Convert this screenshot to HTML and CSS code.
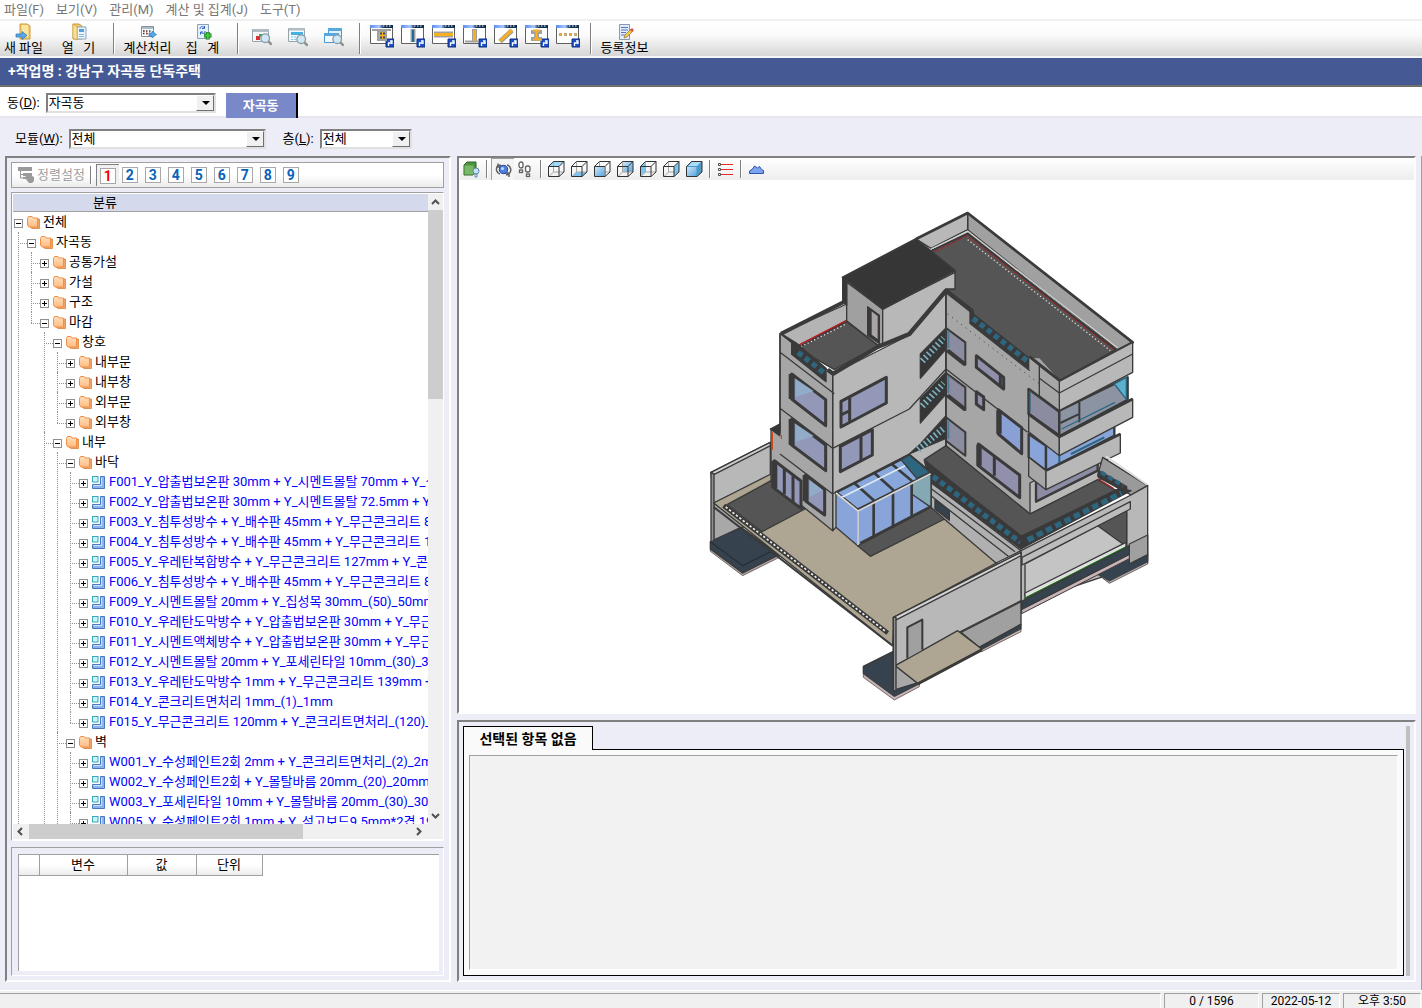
FILE: index.html
```html
<!DOCTYPE html>
<html lang="ko">
<head>
    <meta charset="UTF-8">
    <meta name="viewport" content="width=device-width, initial-scale=1.0">
    <title>강남구 자곡동 단독주택</title>
    <link rel="stylesheet" href="styles.css">
</head>
<body>
    <!-- shared icons -->
    <svg class="defs" width="0" height="0" aria-hidden="true">
        <defs>
            <linearGradient id="g-folder" x1="0" y1="0" x2="0" y2="1"><stop offset="0" stop-color="#ffe0c0"/><stop offset="1" stop-color="#ffbc80"/></linearGradient>
            <linearGradient id="g-blue" x1="0" y1="0" x2="1" y2="1"><stop offset="0" stop-color="#cfe6fa"/><stop offset="1" stop-color="#5aa6dc"/></linearGradient>
            <linearGradient id="g-bar" x1="0" y1="0" x2="1" y2="0"><stop offset="0" stop-color="#5a8cf0"/><stop offset=".4" stop-color="#a8c8ff"/><stop offset=".6" stop-color="#103050"/><stop offset="1" stop-color="#103050"/></linearGradient>
            <symbol id="i-folder" viewBox="0 0 13 13">
                <path d="M4 3h8.500v9.500H5L3 11z" fill="#f0a468" stroke="#d87a30" stroke-width=".7"/>
                <path d="M.5 2.500l1-2h3.500l1 1.500h4.500v9H2L.5 9z" fill="url(#g-folder)" stroke="#f09048"/>
            </symbol>
            <symbol id="i-part" viewBox="0 0 13 13">
                <path d="M8.500.5H12.500V12.500H.5V8.500H8.500z" fill="#8ab4ec" stroke="#4a78c0"/>
                <path d="M9.500 1.500V9.500H1.500" fill="none" stroke="#cfe2fa"/>
                <rect x=".5" y=".5" width="5.500" height="5.500" fill="#c8f4f8" stroke="#38a8b8"/>
            </symbol>
            <symbol id="i-lens" viewBox="0 0 10 10">
                <path d="M6 6l3 3" stroke="#909090" stroke-width="2"/>
                <circle cx="4" cy="4" r="3.300" fill="#d0e8f6" stroke="#8c9aa4"/>
            </symbol>
            <symbol id="i-win" viewBox="0 0 24 24">
                <path d="M.5 2.500h22v17H.5z" fill="#fff" stroke="#606060"/>
                <path d="M0 1h23v3H0z" fill="url(#g-bar)"/>
                <path d="M13 2h1.500M16 2h1.500M19 2h1.500" stroke="#fff"/>
                <path d="M16 15h8v8h-8z" fill="#1c50c8" stroke="#0c2c80"/>
                <path d="M18.500 22v-3h3M20 17h2v3" fill="none" stroke="#fff" stroke-width="1.300"/>
            </symbol>
            <symbol id="i-cube" viewBox="0 0 17 17">
                <path d="M5.500 1v10h10M5.500 11l-4 4" fill="none" stroke="#a8a8a8"/>
                <path d="M.5 5.500h10.500v10H.5zM.5 5.500l5-5H16l-5 5M16 .5V11l-5 4.500" fill="none" stroke="#333"/>
            </symbol>
        </defs>
    </svg>

    <nav class="menubar">
        <a href="#">파일(F)</a>
        <a href="#">보기(V)</a>
        <a href="#">관리(M)</a>
        <a href="#">계산 및 집계(J)</a>
        <a href="#">도구(T)</a>
    </nav>

    <div class="toolbar">
        <button type="button" class="tool">
            <svg width="18" height="18" viewBox="0 0 18 18"><path d="M5 1h7l3 2v13H5z" fill="#f4d078" stroke="#c89838"/><path d="M7 2h6v12H7z" fill="#fbe4a0"/><path d="M1 11h6V8.500l5 4-5 4V14H1z" fill="#58a8e8" stroke="#2870b8" stroke-width=".7"/></svg>
            <span>새 파일</span>
        </button>
        <button type="button" class="tool">
            <svg width="18" height="18" viewBox="0 0 18 18"><path d="M3 1h6l3 2v13H3z" fill="#f0c868" stroke="#c89838"/><path d="M7 4h9v12H7z" fill="#e8f4fc" stroke="#88a8c0"/><path d="M9 6h5v3H9z" fill="#58a0d8"/><path d="M9 11.500h5M9 13.500h5" stroke="#90b8d8"/><path d="M3 1l4 3v13l-4-2z" fill="#fbe09a" stroke="#c89838" stroke-width=".6"/></svg>
            <span>열   기</span>
        </button>
        <i class="sep"></i>
        <button type="button" class="tool">
            <svg width="18" height="18" viewBox="0 0 18 18"><path d="M2.500 3.500h12v10h-12z" fill="#fff" stroke="#889098"/><path d="M3 4h11v2H3z" fill="#a8bccc"/><path d="M4 8h9M4 10.500h9" stroke="#303030" stroke-width="1.500" stroke-dasharray="1.500 1.500"/><path d="M4 8h1.500M7 10.500h1.500" stroke="#c03030" stroke-width="1.500"/><path d="M10 10h3V8l4.500 3.500L13 15v-2h-3z" fill="#58a8e8" stroke="#2870b8" stroke-width=".6"/></svg>
            <span>계산처리</span>
        </button>
        <button type="button" class="tool">
            <svg width="18" height="18" viewBox="0 0 18 18"><path d="M3.500 1.500h11v14h-11z" fill="#e4f0fa" stroke="#88a0b8"/><path d="M6 6c0-2.500 2.500-3 4-1.500M10.500 3v2.500H8M11 8c0 2.500-2.500 3-4 1.500M6.500 11.500V9H9" fill="none" stroke="#2860c8"/><path d="M10 12.500h7.500M13.750 9v7.500" stroke="#18781c" stroke-width="4"/><path d="M10.500 12.500h6.500M13.750 9.500v6.500" stroke="#48c848" stroke-width="2"/></svg>
            <span>집   계</span>
        </button>
        <i class="sep"></i>
        <button type="button" class="tool tool-md" title="모델 검색">
            <svg width="20" height="20" viewBox="0 0 20 20"><path d="M.5 2.500h16v12H.5z" fill="#f4f6f8" stroke="#98a4ac"/><path d="M1 2h16v3H1z" fill="#b0bcc4"/><path d="M4 9h4v4H4z" fill="#d83030"/><path d="M7 7h4v3H7z" fill="#48a048"/><use href="#i-lens" x="8" y="6" width="13" height="13"/></svg>
        </button>
        <button type="button" class="tool tool-md" title="표 검색">
            <svg width="20" height="20" viewBox="0 0 20 20"><path d="M.5 1.500h16v13H.5z" fill="#f0f8fc" stroke="#98a4ac"/><path d="M1 1h16v2.500H1z" fill="#b0bcc4"/><path d="M3 5h12v3H3z" fill="#48b0e0"/><path d="M3 10h11M3 12.500h9" stroke="#80c4e8" stroke-dasharray="2 1"/><use href="#i-lens" x="8" y="7" width="13" height="13"/></svg>
        </button>
        <button type="button" class="tool tool-md" title="창 검색">
            <svg width="20" height="20" viewBox="0 0 20 20"><path d="M4.500 1.500h13v9h-13z" fill="#e4f2fc" stroke="#4898d8"/><path d="M4 1h14v3H4z" fill="#58a8e0"/><path d="M.5 6.500h14v9H.5z" fill="#f4fafe" stroke="#4898d8"/><path d="M0 6h15v3H0z" fill="#58a8e0"/><use href="#i-lens" x="8" y="7" width="13" height="13"/></svg>
        </button>
        <i class="sep"></i>
        <button type="button" class="tool tool-sm" title="기초"><svg width="24" height="24"><use href="#i-win"/><path d="M2 6h19" stroke="#a0a0a0" stroke-width="2"/><path d="M8 7h8v9H8z" fill="#f8b020" stroke="#a0a0a0" stroke-width="2"/><path d="M10 9.500h5M10 13.500h5" stroke="#205080" stroke-width="2" stroke-dasharray="2 1"/></svg></button>
        <button type="button" class="tool tool-sm" title="기둥"><svg width="24" height="24"><use href="#i-win"/><path d="M12 5v13" stroke="#a0a0a0" stroke-width="5"/><path d="M12 6v12" stroke="#187098" stroke-width="2"/></svg></button>
        <button type="button" class="tool tool-sm" title="보"><svg width="24" height="24"><use href="#i-win"/><path d="M2 10.500h19" stroke="#a0a0a0" stroke-width="6"/><path d="M2 10.500h19" stroke="#f8b020" stroke-width="3"/></svg></button>
        <button type="button" class="tool tool-sm" title="벽체"><svg width="24" height="24"><use href="#i-win"/><path d="M2 17.500h14M11.500 5v12" stroke="#a0a0a0" stroke-width="2"/><path d="M11.500 5v12" stroke="#a0a0a0" stroke-width="5"/><path d="M11.500 6v11" stroke="#f8b020" stroke-width="3"/></svg></button>
        <button type="button" class="tool tool-sm" title="계단"><svg width="24" height="24"><use href="#i-win"/><path d="M6 17.500L18 6.500" fill="none" stroke="#a0a0a0" stroke-width="5"/><path d="M6 17L18 6" stroke="#f8b020" stroke-width="3"/></svg></button>
        <button type="button" class="tool tool-sm" title="철골"><svg width="24" height="24"><use href="#i-win"/><path d="M6 6h11v4h-3v3h3v4H6v-4h3v-3H6z" fill="#a0a0a0"/><path d="M8 6.500h7M8 15.500h8M11.500 6v9" stroke="#f8b020" stroke-width="2"/></svg></button>
        <button type="button" class="tool tool-sm" title="기타"><svg width="24" height="24"><use href="#i-win"/><path d="M3 10.500h18" stroke="#a0a0a0" stroke-width="3" stroke-dasharray="3 2"/><path d="M3.500 10.500h18" stroke="#f8b020" stroke-width="2" stroke-dasharray="2 3"/></svg></button>
        <i class="sep"></i>
        <button type="button" class="tool">
            <svg width="18" height="18" viewBox="0 0 18 18"><path d="M3.500 1.500h10v15h-10z" fill="#e4ecf8" stroke="#8898b0"/><path d="M5 4.500h7M5 7h7M5 9.500h5M5 12h4" stroke="#5078c0"/><path d="M8 15l1-3 6-6 2 2-6 6z" fill="#f4c848" stroke="#906020" stroke-width=".6"/><path d="M14 7l2-2 2 2-2 2z" fill="#e05050"/></svg>
            <span>등록정보</span>
        </button>
    </div>

    <header class="title">+작업명 : 강남구 자곡동 단독주택</header>

    <div class="dong-row">
        <label for="dong">동(<u>D</u>):</label>
        <span class="combo combo-dong"><select id="dong"><option>자곡동</option></select></span>
        <button type="button" class="dong-tab">자곡동</button>
    </div>

    <div class="filter-row">
        <label for="module">모듈(<u>W</u>):</label>
        <span class="combo combo-module"><select id="module"><option>전체</option></select></span>
        <label for="floor">층(<u>L</u>):</label>
        <span class="combo combo-floor"><select id="floor"><option>전체</option></select></span>
    </div>

    <main class="work">
        <section class="side sunken">
            <div class="sortbar">
                <button type="button" class="sort" disabled>
                    <svg width="17" height="16" viewBox="0 0 17 16"><path d="M0 0h14v4H0zM5 6h9v3H5zM5 10h7v2H5z" fill="#9a9a9a"/><path d="M2.500 4v7H5M2.500 7.500H5" fill="none" stroke="#9a9a9a"/><path d="M8 8l2-1 6 3v4l-2 2h-3L7 11z" fill="#9a9a9a"/></svg>
                    정렬설정
                </button>
                <i class="sep"></i>
                <button type="button" class="num on"><b>1</b></button>
                <button type="button" class="num"><b>2</b></button>
                <button type="button" class="num"><b>3</b></button>
                <button type="button" class="num"><b>4</b></button>
                <button type="button" class="num"><b>5</b></button>
                <button type="button" class="num"><b>6</b></button>
                <button type="button" class="num"><b>7</b></button>
                <button type="button" class="num"><b>8</b></button>
                <button type="button" class="num"><b>9</b></button>
            </div>

            <div class="tree-box">
                <div class="tree-main">
                    <div class="tree-head"><span>분류</span></div>
                    <div class="tree">
                        <ul>
                            <li><div class="row"><i class="box open"></i><svg><use href="#i-folder"/></svg>전체</div>
                                <ul>
                                    <li><div class="row"><i class="box open"></i><svg><use href="#i-folder"/></svg>자곡동</div>
                                        <ul>
                                            <li><div class="row"><i class="box"></i><svg><use href="#i-folder"/></svg>공통가설</div></li>
                                            <li><div class="row"><i class="box"></i><svg><use href="#i-folder"/></svg>가설</div></li>
                                            <li><div class="row"><i class="box"></i><svg><use href="#i-folder"/></svg>구조</div></li>
                                            <li class="last"><div class="row"><i class="box open"></i><svg><use href="#i-folder"/></svg>마감</div>
                                                <ul>
                                                    <li><div class="row"><i class="box open"></i><svg><use href="#i-folder"/></svg>창호</div>
                                                        <ul>
                                                            <li><div class="row"><i class="box"></i><svg><use href="#i-folder"/></svg>내부문</div></li>
                                                            <li><div class="row"><i class="box"></i><svg><use href="#i-folder"/></svg>내부창</div></li>
                                                            <li><div class="row"><i class="box"></i><svg><use href="#i-folder"/></svg>외부문</div></li>
                                                            <li class="last"><div class="row"><i class="box"></i><svg><use href="#i-folder"/></svg>외부창</div></li>
                                                        </ul>
                                                    </li>
                                                    <li><div class="row"><i class="box open"></i><svg><use href="#i-folder"/></svg>내부</div>
                                                        <ul>
                                                            <li><div class="row"><i class="box open"></i><svg><use href="#i-folder"/></svg>바닥</div>
                                                                <ul class="parts">
                                                                    <li><div class="row"><i class="box"></i><svg><use href="#i-part"/></svg>F001_Y_압출법보온판 30mm + Y_시멘트몰탈 70mm + Y_셀</div></li>
                                                                    <li><div class="row"><i class="box"></i><svg><use href="#i-part"/></svg>F002_Y_압출법보온판 30mm + Y_시멘트몰탈 72.5mm + Y_</div></li>
                                                                    <li><div class="row"><i class="box"></i><svg><use href="#i-part"/></svg>F003_Y_침투성방수 + Y_배수판 45mm + Y_무근콘크리트 8</div></li>
                                                                    <li><div class="row"><i class="box"></i><svg><use href="#i-part"/></svg>F004_Y_침투성방수 + Y_배수판 45mm + Y_무근콘크리트 1</div></li>
                                                                    <li><div class="row"><i class="box"></i><svg><use href="#i-part"/></svg>F005_Y_우레탄복합방수 + Y_무근콘크리트 127mm + Y_콘크</div></li>
                                                                    <li><div class="row"><i class="box"></i><svg><use href="#i-part"/></svg>F006_Y_침투성방수 + Y_배수판 45mm + Y_무근콘크리트 8</div></li>
                                                                    <li><div class="row"><i class="box"></i><svg><use href="#i-part"/></svg>F009_Y_시멘트몰탈 20mm + Y_집성목 30mm_(50)_50mm</div></li>
                                                                    <li><div class="row"><i class="box"></i><svg><use href="#i-part"/></svg>F010_Y_우레탄도막방수 + Y_압출법보온판 30mm + Y_무근</div></li>
                                                                    <li><div class="row"><i class="box"></i><svg><use href="#i-part"/></svg>F011_Y_시멘트액체방수 + Y_압출법보온판 30mm + Y_무근</div></li>
                                                                    <li><div class="row"><i class="box"></i><svg><use href="#i-part"/></svg>F012_Y_시멘트몰탈 20mm + Y_포세린타일 10mm_(30)_30m</div></li>
                                                                    <li><div class="row"><i class="box"></i><svg><use href="#i-part"/></svg>F013_Y_우레탄도막방수 1mm + Y_무근콘크리트 139mm +</div></li>
                                                                    <li><div class="row"><i class="box"></i><svg><use href="#i-part"/></svg>F014_Y_콘크리트면처리 1mm_(1)_1mm</div></li>
                                                                    <li class="last"><div class="row"><i class="box"></i><svg><use href="#i-part"/></svg>F015_Y_무근콘크리트 120mm + Y_콘크리트면처리_(120)_1</div></li>
                                                                </ul>
                                                            </li>
                                                            <li><div class="row"><i class="box open"></i><svg><use href="#i-folder"/></svg>벽</div>
                                                                <ul class="parts">
                                                                    <li><div class="row"><i class="box"></i><svg><use href="#i-part"/></svg>W001_Y_수성페인트2회 2mm + Y_콘크리트면처리_(2)_2mm</div></li>
                                                                    <li><div class="row"><i class="box"></i><svg><use href="#i-part"/></svg>W002_Y_수성페인트2회 + Y_몰탈바름 20mm_(20)_20mm</div></li>
                                                                    <li><div class="row"><i class="box"></i><svg><use href="#i-part"/></svg>W003_Y_포세린타일 10mm + Y_몰탈바름 20mm_(30)_30m</div></li>
                                                                    <li><div class="row"><i class="box"></i><svg><use href="#i-part"/></svg>W005_Y_수성페인트2회 1mm + Y_석고보드9.5mm*2겹 19m</div></li>
                                                                </ul>
                                                            </li>
                                                        </ul>
                                                    </li>
                                                </ul>
                                            </li>
                                        </ul>
                                    </li>
                                </ul>
                            </li>
                        </ul>
                    </div>
                </div>
                <div class="vbar">
                    <svg width="15" height="16"><path d="M4 10l3.500-3.500L11 10" /></svg>
                    <i class="thumb"></i>
                    <svg class="end" width="15" height="16"><path d="M4 6l3.500 3.500L11 6" /></svg>
                </div>
                <div class="hbar">
                    <svg width="16" height="15"><path d="M9 4L5.500 7.500 9 11" /></svg>
                    <i class="thumb"></i>
                    <svg class="end" width="16" height="15"><path d="M5 4l3.500 3.500L5 11" /></svg>
                </div>
                <i class="corner"></i>
            </div>

            <div class="vars">
                <div class="vars-in">
                    <table>
                        <tr><th class="c0"></th><th class="c1">변수</th><th class="c2">값</th><th class="c3">단위</th></tr>
                    </table>
                </div>
            </div>
        </section>

        <div class="right">
            <section class="view sunken">
                <div class="viewbar">
                    <button type="button" title="모델"><svg width="17" height="17" viewBox="0 0 17 17"><path d="M1 4l3-3h9v9l-3 4H1z" fill="#4c9440" stroke="#2c6424"/><path d="M1.500 4.500h9v9h-9z" fill="#78b868"/><circle cx="13" cy="10" r="3" fill="#c8e4fa" stroke="#6088b0"/><path d="M12 13h2v3h-2z" fill="#fff" stroke="#6088b0"/></svg></button>
                    <i class="sep"></i>
                    <button type="button" class="on" title="회전"><svg width="17" height="17" viewBox="0 0 17 17"><path d="M5 13C1.500 12 .5 8 2.500 5L6 4M3 2.500v3.500h3.500M12 4c4 1 5 6 2 9l-3 1M14 16v-4h-4" fill="none" stroke="#606060" stroke-width="1.500"/><circle cx="8.500" cy="8.500" r="4.200" fill="#5080e0" stroke="#2040a0"/><circle cx="7.500" cy="7.500" r="1.600" fill="#c0d8ff"/></svg></button>
                    <button type="button" title="보행"><svg width="17" height="17" viewBox="0 0 17 17"><g fill="#fff" stroke="#606060" stroke-width="1.300"><rect x="2" y="1" width="4" height="6" rx="2"/><rect x="2.500" y="9" width="3" height="2.500"/><rect x="8.500" y="5" width="4.500" height="6" rx="2"/><rect x="9.500" y="13" width="3" height="2.500"/></g></svg></button>
                    <i class="sep"></i>
                    <button type="button" title="위"><svg width="17" height="17"><path d="M1 5l4.500-4.500H16l-5 5z" fill="#a0d8f8"/><use href="#i-cube"/></svg></button>
                    <button type="button" title="아래"><svg width="17" height="17"><path d="M1 15.500L5.500 11H16l-5 4.500z" fill="#7cc4f0"/><use href="#i-cube"/></svg></button>
                    <button type="button" title="앞"><svg width="17" height="17"><use href="#i-cube"/><path d="M1 6h9.500v9H1z" fill="url(#g-blue)"/></svg></button>
                    <button type="button" title="뒤"><svg width="17" height="17"><path d="M5.500 1H16v10H5.500z" fill="url(#g-blue)"/><use href="#i-cube"/></svg></button>
                    <button type="button" title="왼쪽"><svg width="17" height="17"><path d="M1 5.500L5.500 1v10L1 15z" fill="#7cc4f0"/><use href="#i-cube"/></svg></button>
                    <button type="button" title="오른쪽"><svg width="17" height="17"><path d="M11 5.500L16 1v10l-5 4.500z" fill="#7cc4f0"/><use href="#i-cube"/></svg></button>
                    <button type="button" title="전체"><svg width="17" height="17"><path d="M.5 5.500l5-5H16V11l-5 4.500H.5z" fill="#4c98c8" stroke="#333"/><path d="M1 6h9.500v9H1z" fill="url(#g-blue)"/><path d="M2 5l4-4h9l-4 4z" fill="#a8dcf8"/></svg></button>
                    <i class="sep"></i>
                    <button type="button" title="층 목록"><svg width="17" height="17"><path d="M4 3.500h12M4 8.500h12M4 13.500h12" stroke="#e82828"/><path d="M1.500 2.500h2v2h-2zM1.500 7.500h2v2h-2zM1.500 12.500h2v2h-2z" fill="#fff" stroke="#505050"/></svg></button>
                    <i class="sep"></i>
                    <button type="button" title="지형"><svg width="17" height="17"><path d="M1.500 12.500V10l3-2 2-3 3 2 2-1.500 2 3 2 1v3z" fill="#7ca4ec" stroke="#2c54b0"/></svg></button>
                </div>
                <div class="canvas">
                    <svg class="model" viewBox="0 0 1416 1530" role="img" aria-label="단독주택 3D 모델">
                        <g stroke="#3a3a3a" stroke-width="4" stroke-linejoin="round">
                            <!-- west retaining wall and footing -->
                            <path d="M30 820L208 730V830L38 912z" fill="#b8b8b8"/>
                            <path d="M30 820l178-90v10L40 826z" fill="#d0d0d0"/>
                            <path d="M38 912V1028l90-45 50 20z" fill="#a8a8a8"/>
                            <path d="M28 1050l97 72 110-56v9l-110 55-97-73z" fill="#b8a4a4" stroke-width="2"/>
                            <path d="M28 1028l92-43 115 82-110 55-97-72z" fill="#36424e"/>
                            <path d="M28 1028l97 72 110-55" fill="none" stroke="#26303a"/>
                            <path d="M30 820l9 5v200l-9 3z" fill="#909090"/>
                            <!-- front footing -->
                            <path d="M487 1402l90-45v108l70-25 8 15-75 38-93-70z" fill="#36424e"/>
                            <path d="M487 1425l93 68 75-38v8l-75 40-93-68z" fill="#c8b4b4" stroke-width="2"/>
                            <!-- yard -->
                            <path d="M38 912L210 825 400 980 730 960 890 1090 580 1255 575 1340z" fill="#aea692"/>
                            <path d="M38 924L575 1340" fill="none" stroke-width="6"/>
                            <path d="M78 917L210 845 312 930 183 998z" fill="#555"/>
                            <path d="M470 1040l38 32 235-118-53-30z" fill="#555"/>
                            <path d="M68 920L560 1302" fill="none" stroke-width="14"/>
                            <path d="M74 924L556 1299" fill="none" stroke="#eee" stroke-width="5" stroke-dasharray="7 6"/>

                            <!-- walls -->
                            <path d="M237 403L395 525V995L210 845V690l27 15z" fill="#a6a6a6"/>
                            <path d="M395 525L625 408 735 280V740L690 790V830L405 985 395 995z" fill="#b8b8b8"/>
                            <path d="M735 280L1075 545V860L987 945 735 740z" fill="#a6a6a6"/>
                            <path d="M208 690l28-15v35z" fill="#363636"/>
                            <path d="M214 700v52M241 708v12" stroke="#d04818"/>

                            <!-- main roof -->
                            <path d="M800 105L1245 452 1075 545 1020 500 985 480 810 340 735 270h25V215l-80-55z" fill="#555"/>
                            <path d="M800 42L1295 430 1250 452 800 92z" fill="#a0a0a0"/>
                            <path d="M645 120L800 42V92L690 148z" fill="#b8b8b8"/>
                            <path d="M690 150L800 97 1250 447" fill="none" stroke="#d0d0d0"/>
                            <path d="M692 155L800 103 1244 452" fill="none" stroke-width="6"/>
                            <path d="M702 158L798 110 1240 453" fill="none" stroke="#b81818" stroke-width="3" stroke-dasharray="14 5"/>
                            <path d="M800 122L1228 455" fill="none" stroke="#ddd" stroke-width="4" stroke-dasharray="4 7"/>
                            <path d="M645 120L800 42 1295 430 1075 547" fill="none" stroke-width="8"/>

                            <!-- low roof -->
                            <path d="M240 404L437 315V365L290 445z" fill="#b4b4b4"/>
                            <path d="M437 368L532 440 400 512 290 448z" fill="#555"/>
                            <path d="M290 440L437 364" stroke="#b81818"/>
                            <path d="M300 443L437 374" stroke="#ddd" stroke-dasharray="4 7"/>
                            <path d="M240 404L286 432 375 508v40L272 466V430z" fill="#3a3a3a"/>
                            <path d="M240 404L427 310" stroke-width="12"/>
                            <path d="M291 460l84 66" stroke="#2e6680" stroke-width="16" stroke-dasharray="16 11"/>

                            <!-- penthouse -->
                            <path d="M437 250L545 330V435l-15 3-93-73z" fill="#a0a0a0"/>
                            <path d="M545 330L762 220v50h-27L625 405 545 440z" fill="#b8b8b8"/>
                            <path d="M425 235L645 120 762 215 545 330z" fill="#363636" stroke-width="6"/>
                            <path d="M425 235l12 12v72l-12-10z" fill="#363636"/>
                            <path d="M500 323l35 26v84l-35-24z" fill="#3a3a3a"/>
                            <path d="M510 333l22 17v74l-22-16z" fill="#a8a4a8"/>
                            <path d="M380 512l17 12L530 444 625 405 735 275 812 335v40" fill="none" stroke-width="13"/>

                            <!-- parapet glazing -->
                            <path d="M808 338L985 478v36L808 374z" fill="#3a3a3a"/>
                            <path d="M816 358L984 490" stroke="#2e6680" stroke-width="16" stroke-dasharray="16 11"/>
                            <path d="M985 478h30l60 65v40L985 512z" fill="#a6a6a6" stroke="none"/>
                            <path d="M985 472l92 74" stroke-width="9"/>

                            <!-- floor lines -->
                            <path d="M237 460L400 584M237 628L395 748 625 630 735 510 980 700M237 765l158 120 230-120M735 280V740M395 525V995M237 403V700" fill="none"/>
                            <path d="M740 345L1075 600" fill="none" stroke-width="3" stroke-dasharray="3 14"/>

                            <!-- west windows -->
                            <g fill="#9498b8" stroke-width="9">
                                <path d="M272 525L374 602V680L272 600z"/>
                                <path d="M272 660L374 738V815L272 738z"/>
                                <path d="M420 607L556 535V612L420 684z"/>
                                <path d="M418 742L514 692V768L418 818z"/>
                                <path d="M220 785L300 846V928L220 868z"/>
                                <path d="M314 828L371 872V948L314 906z"/>
                                <path d="M446 596V668M420 648l24-12M480 712v74M250 810v76M276 830v80"/>
                            </g>
                            <path d="M272 525V600M272 660V738M314 828V906M220 785V868" stroke-width="18"/>
                            <path d="M284 540L338 576 284 594zM284 675L338 711 284 729zM326 844l40 30-40 20z" fill="#90acc8" stroke="none"/>

                            <!-- stair windows -->
                            <path d="M658 465L735 387V450L658 538z" fill="#363636"/>
                            <path d="M658 600L735 520V585L658 672z" fill="#363636"/>
                            <path d="M658 735L735 650V718L625 765z" fill="#363636"/>
                            <g stroke="#7ab0c0" stroke-width="20" stroke-dasharray="5 8">
                                <path d="M664 486L728 418M664 621L728 553M652 752L728 688"/>
                            </g>
                            <g fill="#8c8ca0" stroke-width="6">
                                <path d="M735 387L793 430V497L735 452z"/>
                                <path d="M735 522L793 565V633L735 588z"/>
                                <path d="M735 655L793 700V770L735 725z"/>
                            </g>
                            <path d="M740 455l53 42M740 590l53 42" stroke-width="12"/>
                            <path d="M742 395v52M742 530v52M742 664v55" stroke="#4c7c94" stroke-width="6"/>

                            <!-- east windows -->
                            <g fill="#9090ac" stroke-width="9">
                                <path d="M826 470L908 535V570L826 505z"/>
                                <path d="M826 578L848 594V632L826 615z"/>
                                <path d="M892 632L962 686V764L892 705z" fill="#88a0d4"/>
                                <path d="M832 735L956 828V896L832 800z"/>
                                <path d="M880 770v60M898 528v34"/>
                            </g>
                            <path d="M894 634V704M834 737V800" stroke-width="16"/>

                            <!-- east bays -->
                            <path d="M987 852V945L1200 840V740z" fill="#b8b8b8"/>
                            <path d="M1005 850V908L1190 815V770z" fill="#8c8ca4" stroke-width="7"/>
                            <path d="M983 705L1035 740V815L983 775z" fill="#88a4d8" stroke-width="7"/>
                            <path d="M1035 740L1240 660V710L1035 815z" fill="#88a4d8" stroke-width="7"/>
                            <path d="M1075 770v28M1110 765l100-50" stroke="#2e6680" stroke-width="6"/>
                            <path d="M983 775L1035 815V872L983 832z" fill="#a6a6a6"/>
                            <path d="M1035 815L1258 705V762L1035 872z" fill="#b8b8b8"/>
                            <path d="M1035 815L1258 705" stroke-width="8"/>
                            <path d="M983 570L1075 638V710L983 645z" fill="#8c8ca0" stroke-width="8"/>
                            <path d="M1075 635L1280 535V602L1075 712z" fill="#8c94a4" stroke-width="7"/>
                            <path d="M1240 555l36-20v66z" fill="#5cb0cc" stroke="#2e6680"/>
                            <path d="M1135 608v62M1078 672l54-26" stroke-width="6"/>
                            <path d="M1082 690l160-80M987 576v64" stroke="#2e6680" stroke-width="4"/>
                            <path d="M983 645L1075 712V770L983 698z" fill="#a6a6a6"/>
                            <path d="M1075 715L1295 600V655L1075 770z" fill="#b8b8b8"/>
                            <path d="M983 645L1075 713 1295 600" fill="none" stroke-width="9"/>
                            <path d="M1075 547L1295 430V520L1075 635z" fill="#b8b8b8"/>
                            <path d="M1015 500L1075 547V635L1015 590z" fill="#a6a6a6"/>
                            <path d="M1075 582L1295 465M1015 538l60 44" fill="none"/>

                            <!-- lower block -->
                            <path d="M1205 775L1340 860 1290 888 1190 830z" fill="#9a9a9a"/>
                            <path d="M1215 772L1340 858" stroke="#ddd" stroke-width="6"/>
                            <path d="M670 782L735 740 987 945 1190 842 1255 880 960 1018z" fill="#555"/>
                            <path d="M690 850L960 1055 885 1092 730 960 690 925z" fill="#b0b0b0"/>
                            <path d="M692 870l250 188M692 892l230 180" fill="none"/>
                            <path d="M702 902l43 34v28l-43-34z" fill="#36424e"/>
                            <path d="M670 785L960 1010V1050L688 850z" fill="#3a3a3a"/>
                            <path d="M696 832L958 1030" stroke="#2e6680" stroke-width="16" stroke-dasharray="17 10"/>
                            <path d="M960 1055L1290 888 1340 860V1085l-50 20-330 110z" fill="#b8b8b8"/>
                            <path d="M960 1012L1255 868 1290 875 960 1050z" fill="#3a3a3a"/>
                            <path d="M980 1023L1262 882" stroke="#2e6680" stroke-width="16" stroke-dasharray="20 11"/>
                            <path d="M1192 815l85 48v18l-85-46z" fill="#3a3a3a"/>
                            <path d="M1200 820l66 40" stroke="#2e6680" stroke-width="12" stroke-dasharray="16 9"/>
                            <path d="M1192 840l45 28" stroke="#a02828"/>
                            <path d="M972 1095L1277 935V1040L972 1190z" fill="#c4c4c4"/>
                            <path d="M1190 980l87-45v108z" fill="#555"/>
                            <path d="M963 1075L1288 908v22L963 1098z" fill="#bcbcbc"/>
                            <path d="M972 1182L1275 1030v15L972 1198z" fill="#e0e0e0"/>
                            <path d="M1285 1035l55-27v60l-55 27z" fill="#a0a0a0"/>
                            <path d="M1190 1125l95-60v30l55-28v25l-115 58z" fill="#36424e"/>
                            <path d="M1190 1125l35 22 115-58v6l-115 58z" fill="#c8b4b4" stroke-width="2"/>
                            <path d="M962 1207L1285 1040v27L962 1232z" fill="#36424e"/>
                            <path d="M962 1232L1285 1067v12L962 1244z" fill="#c8b4b4" stroke-width="3"/>
                            <path d="M970 1198L1275 1043" stroke="#187818" stroke-width="3"/>

                            <!-- street wall -->
                            <path d="M577 1255L960 1060V1205L780 1297 583 1400 577 1465z" fill="#b8b8b8"/>
                            <path d="M577 1255L960 1060v10L587 1262z" fill="#d4d4d4"/>
                            <path d="M780 1300L960 1208v68L835 1345z" fill="#a0a0a0"/>
                            <path d="M835 1345L960 1276v14l-118 62z" fill="#36424e"/>
                            <path d="M842 1352l118-62v8l-118 60z" fill="#c8b4b4" stroke-width="2"/>
                            <path d="M583 1400v72l66-20z" fill="#a8a8a8"/>
                            <path d="M583 1400L770 1295l72 55-192 103z" fill="#aea692"/>
                            <path d="M650 1455l192-102" stroke-width="8"/>
                            <path d="M577 1255h8v220h-8z" fill="#909090"/>
                            <path d="M619 1378V1285l45-23v90" fill="#a0a0a0" stroke-width="6"/>

                            <!-- sun room -->
                            <path d="M405 880L470 932V1040L405 985z" fill="#88a4d8"/>
                            <path d="M470 932L690 822V925L470 1040z" fill="#88a4d8"/>
                            <path d="M632 850l58-29v104l-58-40z" fill="#84a8b4"/>
                            <path d="M405 880L625 768 690 822 470 932z" fill="#88a8dc" stroke-width="8"/>
                            <path d="M600 782l25-14 62 52-40 18z" fill="#2e6680"/>
                            <path d="M460 852l58 52v112M520 822l56 50v114M572 795l60 50v112" fill="none" stroke-width="8"/>
                            <path d="M420 896L612 800" stroke="#dfe8f4" stroke-width="5"/>
                            <path d="M405 882l66 54 218-112M471 936v102" fill="none" stroke="#d8d8d8" stroke-width="5"/>
                            <path d="M478 1032l212-110" stroke-width="7"/>
                        </g>
                    </svg>
                </div>
            </section>

            <section class="detail sunken">
                <div class="detail-in">
                    <button type="button" class="detail-tab">선택된 항목 없음</button>
                    <div class="page"><div class="page-in"></div></div>
                </div>
                <i class="strip"></i>
            </section>
        </div>
    </main>

    <footer class="status">
        <span class="msg"></span>
        <span class="count">0 / 1596</span>
        <span class="date">2022-05-12</span>
        <span class="time">오후 3:50</span>
    </footer>
</body>
</html>
```

FILE: styles.css
```css
* {
    box-sizing: border-box;
}
body {
    margin: 0;
    height: 100vh;
    display: flex;
    flex-direction: column;
    overflow: hidden;
    background: #ededf7;
    color: #000;
    font-family: Roboto, "Noto Sans CJK KR", sans-serif;
    font-size: 13px;
    line-height: 16px;
}
button, select {
    font: inherit;
    color: inherit;
}
button {
    padding: 0;
    border: none;
    background: none;
}
svg {
    display: block;
    flex: none;
}
.defs {
    position: absolute;
}

/* menu */
.menubar {
    display: flex;
    gap: 12px;
    height: 19px;
    padding: 2px 4px;
    background: #fff;
    flex: none;
}
.menubar a {
    color: #777;
    text-decoration: none;
}

/* main toolbar */
.toolbar {
    display: flex;
    height: 39px;
    flex: none;
    border-top: 2px solid #f0f0f0;
    border-bottom: 2px solid #f4f4f4;
    background: linear-gradient(#fff, #fbfbfb 40%, #d6d6d6);
}
.toolbar > :first-child {
    margin-left: -4px;
}
.tool {
    display: flex;
    flex-direction: column;
    align-items: center;
    width: 55px;
    padding-top: 2px;
    white-space: pre;
}
.tool span {
    margin-top: -1px;
}
.tool-md {
    width: 36px;
    padding-top: 6px;
}
.tool-sm {
    width: 31px;
    padding-top: 3px;
}
.sep {
    flex: none;
    width: 2px;
    border-left: 1px solid #808080;
    border-right: 1px solid #fff;
}
.toolbar .sep {
    margin: 2px 5px 2px 7px;
}

/* title */
.title {
    height: 29px;
    flex: none;
    padding: 5px 8px;
    background: #455a94;
    border-bottom: 2px solid #707070;
    color: #fff;
    font-size: 14px;
    font-weight: bold;
}

/* selectors */
.dong-row, .filter-row {
    display: flex;
    align-items: center;
    flex: none;
}
.dong-row {
    height: 31px;
    padding: 2px 7px 0;
    background: #fff;
    border-bottom: 2px solid #e6e6ec;
}
.filter-row {
    height: 38px;
    padding: 4px 15px 0;
}
.combo {
    position: relative;
    height: 20px;
    margin-left: 6px;
}
.combo select {
    appearance: none;
    width: 100%;
    height: 20px;
    padding: 0 20px 0 1px;
    border: 2px solid;
    border-color: #808080 #e0e0e0 #e0e0e0 #808080;
    border-radius: 0;
    background: #fff;
    line-height: 14px;
}
.combo::before {
    content: "";
    position: absolute;
    top: 2px;
    right: 2px;
    bottom: 2px;
    width: 16px;
    background: #f0f0f0;
    border: 1px solid;
    border-color: #fff #707070 #707070 #fff;
    pointer-events: none;
}
.combo::after {
    content: "";
    position: absolute;
    top: 8px;
    right: 6px;
    border: 4px solid transparent;
    border-top-color: #000;
    border-bottom: none;
    pointer-events: none;
}
.combo-dong {
    width: 170px;
}
.combo-module {
    width: 197px;
    margin-right: 17px;
}
.combo-floor {
    width: 92px;
}
.dong-tab {
    align-self: stretch;
    width: 72px;
    margin: 4px 0 -2px 10px;
    background: #7988c8;
    border-right: 2px solid #000;
    color: #fff;
    font-weight: bold;
}

/* work area */
.work {
    flex: 1;
    min-height: 0;
    display: flex;
    gap: 6px;
    padding: 0 5px 8px;
    border-right: 1px solid #a0a0a0;
}
.sunken {
    border: 2px solid;
    border-color: #808080 #fff #fff #808080;
}
.side {
    width: 446px;
    flex: none;
    display: flex;
    flex-direction: column;
    padding: 4px 5px 4px 4px;
}
.sortbar {
    display: flex;
    align-items: center;
    height: 26px;
    flex: none;
    border: 1px solid #a0a0a0;
    background: linear-gradient(#fff 50%, #ececec);
}
.sortbar .sep {
    height: 18px;
    margin: 0 4px 0 5px;
}
.sort {
    display: flex;
    align-items: center;
    gap: 2px;
    padding-left: 6px;
    color: #a0a0a0;
}
.num {
    width: 23px;
    height: 22px;
    padding: 2px 3px;
}
.num b {
    display: block;
    width: 16px;
    height: 16px;
    border: 1px solid #a8a8a8;
    background: #fff;
    color: #0862b8;
    font: bold 14px/14px Roboto, sans-serif;
}
.num.on {
    background: #f0f0f0;
    border-top: 1px solid #808080;
    border-left: 1px solid #808080;
}
.num.on b {
    color: #f00;
}

/* tree */
.tree-box {
    flex: 1;
    min-height: 0;
    display: grid;
    grid-template: minmax(0, 1fr) 15px / minmax(0, 1fr) 15px;
    margin-top: 4px;
    padding: 1px 0 1px 1px;
    border: 1px solid #a0a0a0;
    border-right-color: #fff;
    border-bottom-color: #fff;
    background: #fff;
}
.tree-main {
    display: flex;
    flex-direction: column;
    overflow: hidden;
}
.tree-head {
    height: 18px;
    flex: none;
    background: #d4d9ec;
    border-bottom: 1px solid #a0a0a0;
    line-height: 17px;
}
.tree-head span {
    margin-left: 80px;
}
.tree {
    flex: 1;
    min-height: 0;
    overflow: hidden;
}
.tree ul {
    list-style: none;
    margin: 0;
    padding: 0 0 0 13px;
}
.tree > ul {
    padding-left: 1px;
}
.tree li {
    position: relative;
}
.tree li li::before {
    content: "";
    position: absolute;
    left: -9px;
    top: 0;
    height: 100%;
    border-left: 1px dotted #909090;
}
.tree li.last::before {
    height: 11px;
}
.tree li li::after {
    content: "";
    position: absolute;
    left: -9px;
    top: 11px;
    width: 9px;
    border-top: 1px dotted #909090;
}
.row {
    display: flex;
    align-items: center;
    height: 20px;
    white-space: nowrap;
}
.row svg {
    width: 13px;
    height: 13px;
    margin: 0 3px 0 4px;
}
.parts .row {
    color: #00f;
}
.parts .row svg {
    margin-right: 4px;
}
.box {
    flex: none;
    width: 9px;
    height: 9px;
    margin-top: 3px;
    border: 1px solid #909090;
    background: linear-gradient(#000, #000) center / 5px 1px no-repeat, linear-gradient(#000, #000) center / 1px 5px no-repeat, #fff;
}
.box.open {
    background: linear-gradient(#000, #000) center / 5px 1px no-repeat, #fff;
}
.vbar, .hbar {
    display: flex;
    background: #f0f0f0;
}
.vbar {
    flex-direction: column;
}
.vbar path, .hbar path {
    fill: none;
    stroke: #505050;
    stroke-width: 2;
}
.thumb {
    background: #cdcdcd;
}
.vbar .thumb {
    width: 15px;
    height: 30%;
}
.hbar .thumb {
    width: 66%;
    height: 15px;
}
.vbar .end {
    margin-top: auto;
}
.hbar .end {
    margin-left: auto;
}
.corner {
    background: #f0f0f0;
}

/* variables */
.vars {
    height: 129px;
    flex: none;
    margin-top: 6px;
    padding: 6px 4px 4px 6px;
    border: 1px solid;
    border-color: #a0a0a0 #fff #fff #a0a0a0;
}
.vars-in {
    height: 100%;
    border-top: 1px solid #a0a0a0;
    border-left: 1px solid #a0a0a0;
    background: #fff;
}
.vars table {
    border-collapse: collapse;
    table-layout: fixed;
    width: 243px;
}
.vars th {
    height: 20px;
    padding: 0;
    border-right: 1px solid #a0a0a0;
    border-bottom: 1px solid #a0a0a0;
    background: linear-gradient(#fff 50%, #ececec);
    font-weight: normal;
}
.c0 {
    width: 20px;
}
.c1 {
    width: 88px;
}
.c2 {
    width: 69px;
}
.c3 {
    width: 66px;
}

/* model view */
.right {
    flex: 1;
    min-width: 0;
    display: flex;
    flex-direction: column;
    gap: 6px;
}
.view {
    flex: 1;
    min-height: 0;
    display: flex;
    flex-direction: column;
    background: #fff;
}
.viewbar {
    display: flex;
    height: 22px;
    flex: none;
    margin-left: 1px;
    background: linear-gradient(#fff, #ededed);
}
.viewbar button {
    width: 23px;
    height: 22px;
    display: flex;
    align-items: center;
    justify-content: center;
}
.viewbar .sep {
    margin: 2px 3px;
}
.viewbar .on {
    background: #f4f4f4;
    border-top: 1px solid #a0a0a0;
    border-left: 1px solid #a0a0a0;
}
.canvas {
    flex: 1;
    min-height: 0;
    display: flex;
    justify-content: center;
    align-items: flex-end;
    padding-bottom: 3px;
}
.model {
    width: 474px;
    height: 510px;
    max-height: 100%;
}

/* detail */
.detail {
    height: 262px;
    flex: none;
    display: flex;
    gap: 2px;
    padding: 4px;
}
.detail-in {
    flex: 1;
    display: flex;
    flex-direction: column;
}
.detail-tab {
    position: relative;
    align-self: flex-start;
    width: 130px;
    height: 24px;
    margin-bottom: -1px;
    border: 1px solid #000;
    border-bottom: none;
    background: #fafafa;
    font-size: 14px;
    font-weight: bold;
}
.page {
    flex: 1;
    padding: 5px;
    border: 1px solid #000;
    background: #fafafa;
}
.page-in {
    height: 100%;
    border: 1px solid;
    border-color: #a0a0a0 #fff #fff #a0a0a0;
    background: #f2f2f2;
}
.strip {
    width: 4px;
    background: #c0c0c0;
}

/* status bar */
.status {
    display: flex;
    gap: 3px;
    height: 18px;
    flex: none;
    padding: 2px 1px 0 0;
    border-top: 1px solid #fff;
    background: #f0f0f0;
    font-size: 12px;
    line-height: 14px;
    text-align: center;
}
.status span {
    border-top: 1px solid #a0a0a0;
    border-left: 1px solid #a0a0a0;
    border-right: 1px solid #fff;
}
.status .msg {
    flex: 1;
    border-left: none;
}
.count {
    width: 95px;
}
.date, .time {
    width: 78px;
}
```
